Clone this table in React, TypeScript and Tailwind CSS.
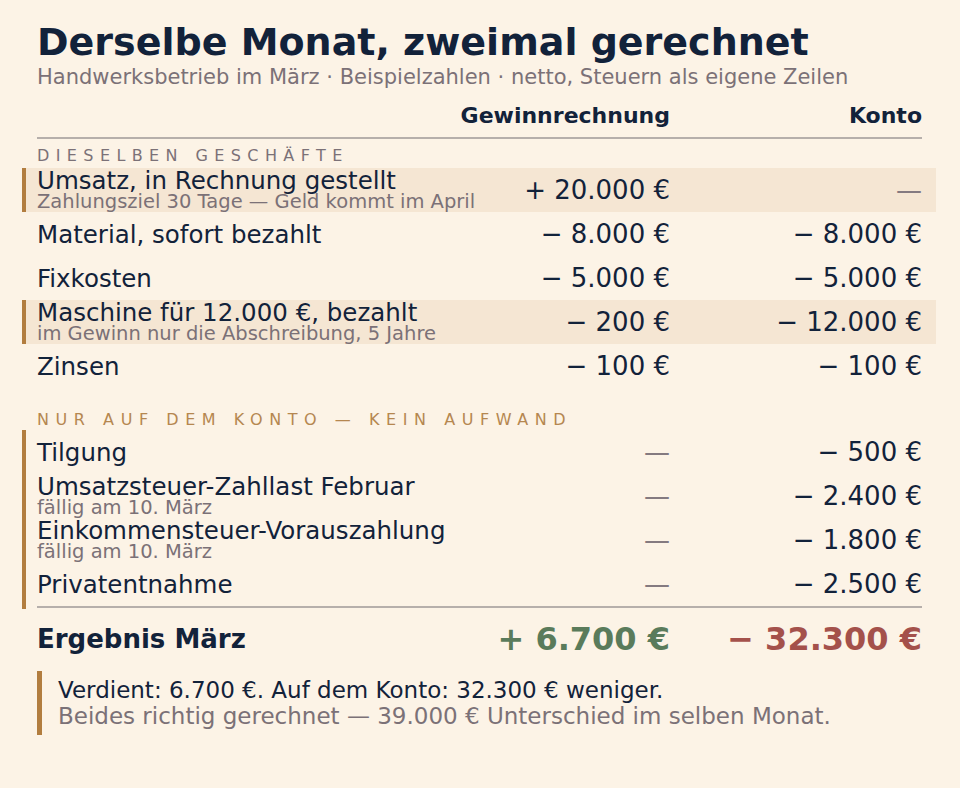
import React from "react";

const F = { fontFamily: '"DejaVu Sans", Verdana, sans-serif' };

type Row = { label: string; sub?: string; a: string; b: string; hl?: boolean };

const rows1: Row[] = [
  { label: "Umsatz, in Rechnung gestellt", sub: "Zahlungsziel 30 Tage — Geld kommt im April", a: "+ 20.000 €", b: "—", hl: true },
  { label: "Material, sofort bezahlt", a: "− 8.000 €", b: "− 8.000 €" },
  { label: "Fixkosten", a: "− 5.000 €", b: "− 5.000 €" },
  { label: "Maschine für 12.000 €, bezahlt", sub: "im Gewinn nur die Abschreibung, 5 Jahre", a: "− 200 €", b: "− 12.000 €", hl: true },
  { label: "Zinsen", a: "− 100 €", b: "− 100 €" },
];

const rows2: Row[] = [
  { label: "Tilgung", a: "—", b: "− 500 €" },
  { label: "Umsatzsteuer-Zahllast Februar", sub: "fällig am 10. März", a: "—", b: "− 2.400 €" },
  { label: "Einkommensteuer-Vorauszahlung", sub: "fällig am 10. März", a: "—", b: "− 1.800 €" },
  { label: "Privatentnahme", a: "—", b: "− 2.500 €" },
];

function Val({ v }: { v: string }) {
  const dash = v === "—";
  return (
    <div className={"text-right whitespace-nowrap text-[26px] leading-[30px] " + (dash ? "text-[#847a80]" : "text-[#12223a]")}>
      {v}
    </div>
  );
}

function RowInner({ r }: { r: Row }) {
  return (
    <div className="grid grid-cols-[minmax(0,1fr)_220px_252px] items-center h-[44px]">
      <div className="flex flex-col justify-center whitespace-nowrap min-w-0">
        <div className="text-[24.5px] leading-[23px] text-[#12223a]">{r.label}</div>
        {r.sub && <div className="text-[19.5px] leading-[20px] text-[#7b7177]">{r.sub}</div>}
      </div>
      <Val v={r.a} />
      <Val v={r.b} />
    </div>
  );
}

export default function App() {
  return (
    <div style={F} className="w-[960px] h-[788px] bg-[#fcf3e6] overflow-hidden">
      <div className="pl-[37px] pr-[38px] pt-[22px]">
        <div className="text-[38px] leading-[40px] font-bold text-[#12223a] whitespace-nowrap">
          Derselbe Monat, zweimal gerechnet
        </div>
        <div className="mt-[2px] text-[21px] leading-[26px] text-[#7b7177] whitespace-nowrap">
          Handwerksbetrieb im März · Beispielzahlen · netto, Steuern als eigene Zeilen
        </div>

        <div className="mt-[14px] grid grid-cols-[minmax(0,1fr)_220px_252px] pb-[9px] border-b-2 border-[#b6afab]">
          <div />
          <div className="text-right text-[22px] leading-[24px] font-bold text-[#12223a]">Gewinnrechnung</div>
          <div className="text-right text-[22px] leading-[24px] font-bold text-[#12223a]">Konto</div>
        </div>

        <div className="pt-[7px] pb-[2px] text-[16px] leading-[20px] tracking-[0.4em] text-[#7b7177] whitespace-nowrap">
          DIESELBEN GESCHÄFTE
        </div>

        {rows1.map((r, i) =>
          r.hl ? (
            <div key={i} className="-ml-[15px] -mr-[14px] pl-[11px] pr-[14px] border-l-4 border-[#b27d3f] bg-[#f5e6d3]">
              <RowInner r={r} />
            </div>
          ) : (
            <RowInner key={i} r={r} />
          )
        )}

        <div className="pt-[22px] text-[16px] leading-[20px] tracking-[0.41em] text-[#b58750] whitespace-nowrap">
          NUR AUF DEM KONTO — KEIN AUFWAND
        </div>

        <div className="-ml-[15px] pl-[11px] border-l-4 border-[#b27d3f] pb-[1px]">
          <div className="border-b-2 border-[#b6afab]">
            {rows2.map((r, i) => (
              <RowInner key={i} r={r} />
            ))}
          </div>
        </div>

        <div className="grid grid-cols-[minmax(0,1fr)_220px_252px] items-center h-[60px]">
          <div className="text-[26px] leading-[30px] font-bold text-[#12223a]">Ergebnis März</div>
          <div className="text-right whitespace-nowrap text-[32px] leading-[36px] font-bold text-[#5a7b5b]">+ 6.700 €</div>
          <div className="text-right whitespace-nowrap text-[32px] leading-[36px] font-bold text-[#a4514b]">− 32.300 €</div>
        </div>

        <div className="mt-[2px] border-l-[5px] border-[#b27d3f] pl-[16px] py-[6px]">
          <div className="text-[23px] leading-[26px] text-[#12223a] whitespace-nowrap">
            Verdient: 6.700 €. Auf dem Konto: 32.300 € weniger.
          </div>
          <div className="text-[23px] leading-[26px] text-[#7b7177] whitespace-nowrap">
            Beides richtig gerechnet — 39.000 € Unterschied im selben Monat.
          </div>
        </div>
      </div>
    </div>
  );
}
